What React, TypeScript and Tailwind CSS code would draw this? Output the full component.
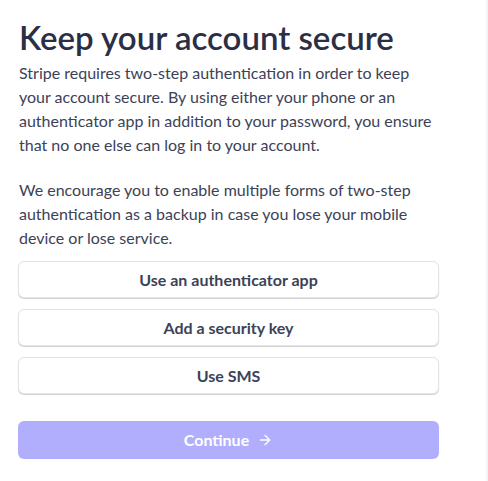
import React from 'react';
import { ArrowRight } from 'lucide-react';

const options = ['Use an authenticator app', 'Add a security key', 'Use SMS'];

const App: React.FC = () => {
  return (
    <div className="min-h-[481px] w-[488px] bg-white border-r-2 border-[#f3f3f5] font-['Lato','Noto_Sans',sans-serif] text-[#3c4257]">
      <div className="pl-[18px] pr-[47px] pt-[14px] pb-[22px]">
        <h1 className="pl-px text-[33px] leading-[46px] font-semibold text-[#2a2f45]">Keep your account secure</h1>
        <p className="mt-[1px] pl-px text-base leading-6">
          Stripe requires two-step authentication in order to keep your account secure. By using either your phone or an
          authenticator app in addition to your password, you ensure that no one else can log in to your account.
        </p>
        <p className="mt-[21px] pl-px text-base leading-6">
          We encourage you to enable multiple forms of two-step authentication as a backup in case you lose your mobile
          device or lose service.
        </p>

        <div className="mt-[11px] flex flex-col gap-[11px]">
          {options.map((label) => (
            <button
              key={label}
              className="h-[37px] w-full rounded-md border border-[#e3e3e6] bg-white text-base font-bold text-[#3c4257] shadow-[0_1px_1px_rgba(0,0,0,0.18)]"
            >
              {label}
            </button>
          ))}
        </div>

        <button className="mt-[27px] flex h-[38px] w-full items-center justify-center gap-2 rounded-md bg-[#b1aefd] text-base font-bold text-white">
          Continue
          <ArrowRight className="h-4 w-4" strokeWidth={2} />
        </button>
      </div>
    </div>
  );
};

export default App;
